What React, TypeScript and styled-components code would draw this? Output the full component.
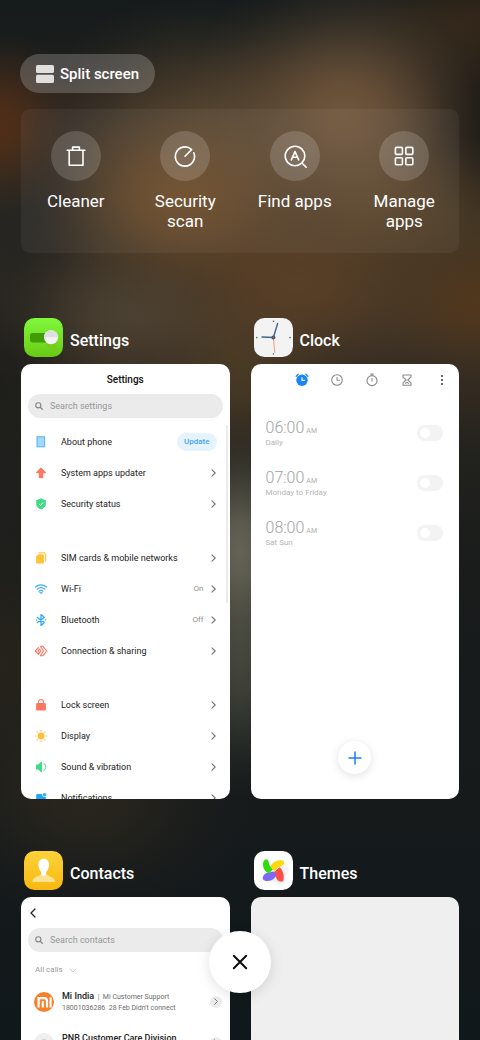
import React from "react";
import styled, { createGlobalStyle } from "styled-components";

const GlobalStyle = createGlobalStyle`
  *, *::before, *::after { box-sizing: border-box; }
  body { margin: 0; background: #161a1b; font-family: Roboto, "Liberation Sans", sans-serif; }
  h1, h2, h3, p, ul { margin: 0; padding: 0; }
  ul { list-style: none; }
  button { border: 0; padding: 0; background: none; color: inherit; font: inherit; cursor: pointer; }
  svg { display: block; flex: none; }
`;

/* A soft patch of wallpaper light that eases out towards its edge. */
const glow = (size: string, at: string, rgb: string, alpha: number) => {
  const stops = [
    [1, 0],
    [0.88, 20],
    [0.62, 40],
    [0.3, 62],
    [0.09, 82],
    [0, 100],
  ].map(([k, pos]) => `rgba(${rgb}, ${(alpha * k).toFixed(3)}) ${pos}%`);
  return `radial-gradient(ellipse ${size} at ${at}, ${stops.join(", ")})`;
};

const wallpaper = [
  glow("16% 9%", "0% 12%", "88, 47, 20", 0.8),
  glow("34% 15%", "72% 11%", "122, 93, 64", 0.85),
  glow("32% 10%", "38% 19%", "120, 80, 42", 0.75),
  glow("34% 13%", "42% 12%", "106, 86, 58", 0.55),
  glow("36% 10%", "62% 27%", "96, 66, 38", 0.75),
  glow("30% 8%", "82% 20%", "88, 64, 36", 0.65),
  glow("24% 8%", "100% 29%", "86, 56, 26", 0.75),
  glow("28% 8%", "27% 30%", "80, 70, 54", 0.7),
  glow("30% 8%", "100% 2%", "56, 41, 24", 0.8),
  glow("20% 12%", "100% 11%", "24, 23, 20", 0.95),
  glow("32% 18%", "2% 22%", "36, 36, 33", 0.95),
  glow("24% 16%", "0% 37%", "27, 28, 26", 0.9),
  glow("24% 10%", "50% 36%", "84, 66, 40", 0.6),
  glow("16% 13%", "50% 53%", "104, 102, 88", 0.95),
  glow("16% 13%", "50% 64%", "72, 74, 64", 0.85),
  glow("36% 12%", "18% 77%", "48, 42, 30", 0.7),
  glow("24% 18%", "0% 64%", "44, 38, 28", 0.7),
  "linear-gradient(#151a1b 0%, #1a1d1c 4%, #27221d 8%, #382f26 13%, #403525 22%, #3f3326 31%, #352c21 36%, #22221e 44%, #191c1b 55%, #161a1b 76%, #11181b 100%)",
].join(", ");

const Screen = styled.div`
  position: relative;
  height: 100vh;
  overflow: hidden;
  background: ${wallpaper};
`;

const Recents = styled.main`
  height: 100%;
  overflow-y: auto;
  scrollbar-width: none;
  padding: 54px 21px 52px;
`;

const SplitButton = styled.button`
  display: flex;
  align-items: center;
  gap: 6px;
  height: 39px;
  margin-left: -1px;
  padding: 0 16px;
  border-radius: 20px;
  background: rgba(255, 255, 255, 0.2);
  color: #fff;
  font-size: 15px;
  font-weight: 500;
`;

const ToolPanel = styled.nav`
  display: grid;
  grid-template-columns: repeat(4, 1fr);
  min-height: 144px;
  margin-top: 16px;
  padding-top: 22px;
  border-radius: 9px;
  background: rgba(255, 255, 255, 0.05);
`;

const Tool = styled.button`
  display: flex;
  flex-direction: column;
  align-items: center;
  gap: 10px;
  color: #fff;
  font-size: 17px;
  line-height: 20px;
`;

const ToolIcon = styled.span`
  display: grid;
  place-items: center;
  width: 50px;
  height: 50px;
  border-radius: 50%;
  background: rgba(255, 255, 255, 0.16);
`;

const ToolLabel = styled.span`
  max-width: 76px;
`;

const AppGrid = styled.div`
  display: grid;
  grid-template-columns: 1fr 1fr;
  gap: 52px 21px;
  margin-top: 65px;
`;

const AppHeader = styled.header`
  display: flex;
  align-items: center;
  gap: 7px;
  padding: 0 3px 7px;
`;

const AppName = styled.h2`
  padding-top: 7px;
  color: #fff;
  font-size: 16px;
  font-weight: 500;
  line-height: 20px;
`;

const Card = styled.div<{ $tone?: string }>`
  position: relative;
  display: flex;
  flex-direction: column;
  aspect-ratio: 417 / 870;
  overflow: hidden;
  border-radius: 10px;
  background: ${(p) => p.$tone ?? "#fff"};
  color: #222;
`;

const CardTitle = styled.h3`
  padding: 8px 0 6px;
  color: #111;
  font-size: 10px;
  font-weight: 500;
  line-height: 16px;
  text-align: center;
`;

const Search = styled.label`
  display: flex;
  flex: none;
  align-items: center;
  gap: 7px;
  height: 24px;
  margin: 0 7px;
  padding: 0 7px;
  border-radius: 12px;
  background: #ebebeb;
`;

const SearchInput = styled.input`
  flex: 1;
  min-width: 0;
  border: 0;
  padding: 0;
  outline: 0;
  background: none;
  font: 400 9px/14px Roboto, "Liberation Sans", sans-serif;
  &::placeholder { color: #969696; opacity: 1; }
`;

const SettingsList = styled.div`
  padding-top: 8px;
`;

const SettingsGroup = styled.ul`
  & + & { margin-top: 23px; }
`;

const SettingsRow = styled.button`
  display: flex;
  align-items: center;
  width: 100%;
  height: 31px;
  padding: 0 13px;
  font-size: 9px;
  line-height: 14px;
  text-align: left;
`;

const RowLabel = styled.span`
  flex: 1;
  padding-left: 13px;
  white-space: nowrap;
`;

const RowValue = styled.span`
  margin-right: 5px;
  color: #8d8d8d;
  font-size: 8px;
`;

const UpdatePill = styled.span`
  padding: 2px 7px;
  border-radius: 9px;
  background: #e4f3fe;
  color: #45a4ee;
  font-size: 8px;
  font-weight: 500;
`;

const ScrollThumb = styled.span`
  position: absolute;
  top: 14%;
  right: 2px;
  width: 2px;
  height: 41%;
  border-radius: 1px;
  background: #ebebeb;
`;

const ClockTabs = styled.div`
  display: flex;
  justify-content: flex-end;
  gap: 21px;
  padding: 9px 10px 0 0;
`;

const ClockTab = styled.button`
  display: grid;
  place-items: center;
  width: 14px;
  height: 14px;
`;

const AlarmList = styled.ul`
  padding: 21px 16px 0 15px;
`;

const Alarm = styled.li`
  display: flex;
  align-items: center;
  justify-content: space-between;
  height: 50px;
  color: #b4b4b4;
`;

const AlarmText = styled.div`
  padding-top: 1px;
`;

const AlarmTime = styled.p`
  font-size: 16px;
  font-weight: 300;
  line-height: 16px;
  color: #a2a2a2;
`;

const Meridiem = styled.span`
  margin-left: 2px;
  color: #b0b0b0;
  font-size: 7px;
  font-weight: 400;
`;

const AlarmDays = styled.p`
  font-size: 8px;
  line-height: 8px;
`;

const Switch = styled.input.attrs({ type: "checkbox" })`
  appearance: none;
  display: flex;
  align-items: center;
  width: 26px;
  height: 16px;
  margin: 0;
  padding: 0 3px;
  border-radius: 8px;
  background: #f3f3f3;
  cursor: pointer;
  &::before {
    content: "";
    width: 10px;
    height: 10px;
    border-radius: 50%;
    background: #fff;
  }
  &:checked { justify-content: flex-end; background: #1a84fb; }
`;

const AddButton = styled.button`
  display: grid;
  place-items: center;
  width: 33px;
  height: 33px;
  margin: auto auto 25px;
  border-radius: 50%;
  background: #fff;
  box-shadow: 0 2px 10px rgba(0, 0, 0, 0.12);
`;

const BackButton = styled.button`
  display: grid;
  flex: none;
  place-items: center;
  width: 24px;
  height: 31px;
`;

const CallFilter = styled.button`
  display: flex;
  align-items: center;
  gap: 6px;
  padding: 13px 14px 6px;
  color: #999;
  font-size: 8px;
  line-height: 10px;
`;

const CallRow = styled.li`
  display: flex;
  align-items: center;
  gap: 8px;
  height: 41px;
  padding: 0 8px 0 13px;
`;

const Avatar = styled.span<{ $brand?: boolean }>`
  display: grid;
  flex: none;
  place-items: center;
  width: 20px;
  height: 20px;
  overflow: hidden;
  border-radius: 50%;
  background: ${(p) => (p.$brand ? "#f6812a" : "#efefef")};
`;

const CallText = styled.div`
  flex: 1;
  min-height: 24px;
  padding-top: 2px;
  color: #6c6c6c;
  font-size: 7px;
  line-height: 11px;
  white-space: nowrap;
`;

const CallName = styled.span`
  color: #222;
  font-size: 9px;
  font-weight: 500;
`;

const CallMore = styled.button`
  display: grid;
  flex: none;
  place-items: center;
  width: 12px;
  height: 12px;
  border-radius: 50%;
  background: #ececec;
`;

const CloseAll = styled.button`
  position: absolute;
  bottom: 47px;
  left: calc(50% - 31px);
  display: grid;
  place-items: center;
  width: 62px;
  height: 62px;
  border-radius: 50%;
  background: #fff;
  box-shadow: 0 3px 14px rgba(0, 0, 0, 0.12);
`;

const SplitIcon = () => (
  <svg width="18" height="18" viewBox="0 0 18 18" fill="#e0dfdd">
    <rect width="18" height="8" rx="1.6" />
    <rect y="9.7" width="18" height="8.3" rx="1.6" />
  </svg>
);

const line = { fill: "none", stroke: "#fff", strokeWidth: 1.6, strokeLinecap: "round", strokeLinejoin: "round" } as const;

const TrashIcon = () => (
  <svg width="24" height="24" viewBox="0 0 24 24" {...line}>
    <path d="M3.2 6.2h17.6M5.2 6.4V21.2h13.8V6.4M8.6 6V3.1h6.8V6" />
  </svg>
);

const ScanIcon = () => (
  <svg width="24" height="24" viewBox="0 0 24 24" {...line}>
    <path d="M12 12.2L18.6 5.6A9.6 9.6 0 1 0 20.8 8.8" />
  </svg>
);

const FindIcon = () => (
  <svg width="26" height="26" viewBox="0 0 26 26" {...line}>
    <circle cx="13" cy="13" r="9.8" />
    <path d="M20.2 20.2L24.2 24.2M9.3 16.8L13 8.6L16.7 16.8M10.6 14.2H15.4" />
  </svg>
);

const GridIcon = () => (
  <svg width="24" height="24" viewBox="0 0 24 24" {...line}>
    {[3.4, 13.8].map((x) => [3.4, 13.8].map((y) => <rect key={`${x}-${y}`} x={x} y={y} width="7" height="7" rx="1" />))}
  </svg>
);

const SettingsLogo = () => (
  <svg width="39" height="39" viewBox="0 0 39 39">
    <defs>
      <linearGradient id="green" x2="0" y2="1">
        <stop stopColor="#80f83c" />
        <stop offset="1" stopColor="#68cb14" />
      </linearGradient>
    </defs>
    <rect width="39" height="39" rx="10.5" fill="url(#green)" />
    <path d="M22 26L30 35L33 32L31 24Z" fill="#7bc81c" opacity="0.8" />
    <rect x="6" y="15" width="20" height="9.4" rx="2.6" fill="#419c06" />
    <circle cx="27" cy="19.2" r="7" fill="#f4f3f3" />
    <path d="M20 19.2h14A7 7 0 0 0 20 19.2Z" fill="#e0dfdf" />
  </svg>
);

const ClockLogo = () => (
  <svg width="39" height="39" viewBox="0 0 39 39" strokeLinecap="round">
    <rect width="39" height="39" rx="10.5" fill="#f3f3f4" />
    <g fill="#55585f">
      <circle cx="19.4" cy="3.2" r="0.8" />
      <circle cx="36" cy="19.6" r="0.8" />
      <circle cx="19.4" cy="36" r="0.8" />
      <circle cx="2.8" cy="19.6" r="0.8" />
    </g>
    <path d="M19.3 19.5L20.8 34.5" stroke="#f6a27e" strokeWidth="1.1" />
    <path d="M19.4 19.5L8 19M19.4 19.5L23.6 5.5" stroke="#3f658e" strokeWidth="1.4" />
    <circle cx="19.4" cy="19.5" r="2" fill="#4c5878" />
    <circle cx="19.4" cy="19.5" r="0.8" fill="#9b5a50" />
  </svg>
);

const ContactsLogo = () => (
  <svg width="39" height="39" viewBox="0 0 39 39">
    <defs>
      <linearGradient id="yellow" x2="0" y2="1">
        <stop stopColor="#fcd33a" />
        <stop offset="1" stopColor="#f9b710" />
      </linearGradient>
    </defs>
    <rect width="39" height="39" rx="10.5" fill="url(#yellow)" />
    <path d="M8.4 31C8.6 25.8 13.5 26 17 23.4H22.4C25.9 26 30.8 25.8 31 31Z" fill="#fde293" />
    <path d="M19.7 7.8C23.2 7.8 25.2 10.3 25 14C24.8 17.2 23.6 19.6 22.2 20.9V23.2C22.2 25.4 17.2 25.4 17.2 23.2V20.9C15.8 19.6 14.6 17.2 14.4 14C14.2 10.3 16.2 7.8 19.7 7.8Z" fill="#fff" />
  </svg>
);

const ThemesLogo = () => (
  <svg width="39" height="39" viewBox="0 0 39 39">
    <rect width="39" height="39" rx="10.5" fill="#fff" />
    <path d="M30 13L35 18L28 35L14 28L22 20Z" fill="#f3f3f4" />
    <path d="M19.5 20.5L13.5 21.8C10.6 22.6 9 24.4 8.6 27.4C9.6 30 14 30.8 17.4 29.2C20 28 22.4 25.4 23.2 22.4Z" fill="#7b68f5" />
    <path d="M20.4 20.6L25.6 16.2C28.6 19 30.4 23 29.6 28.6C29.4 30.6 28 31 26.2 30.6C23.2 29.6 21.6 27.8 21.8 23Z" fill="#fd4e47" />
    <path d="M16.4 15.4C18.2 11.4 22.4 8.8 28 9.2C29.8 9.6 30.6 11 30.2 12.6C28.8 15.4 25.4 15.4 23.4 17L20.6 20.6Z" fill="#fdd90b" />
    <path d="M9 14C8.8 10.8 10 8.6 12.6 8.2C14.2 8.6 14.6 10.4 15 12.4C15.6 15.4 17.4 16.4 18.8 18.6L14.8 22.6C11.2 20.6 9.2 18 9 14Z" fill="#2fdc0e" />
  </svg>
);

const SearchIcon = () => (
  <svg width="8" height="8" viewBox="0 0 8 8" fill="none" stroke="#858585" strokeLinecap="round">
    <circle cx="3.3" cy="3.3" r="2.6" strokeWidth="1.1" />
    <path d="M5.4 5.4L7.3 7.3" strokeWidth="1.3" />
  </svg>
);

const Chevron = ({ color = "#777", size = 7 }) => (
  <svg width={size} height={size} viewBox="0 0 7 7" fill="none" stroke={color} strokeLinecap="round" strokeLinejoin="round">
    <path d="M2.6 0.7L5.4 3.5L2.6 6.3" />
  </svg>
);

const rowIcons: Record<string, React.ReactNode> = {
  phone: <rect x="3" y="1.8" width="7.6" height="10" fill="#a3d8fc" stroke="#51b3f6" />,
  update: <path d="M7 1.2L12 6.4Q12.2 7.2 11.4 7.2H9.2V11.6Q9.2 12.2 8.6 12.2H5.4Q4.8 12.2 4.8 11.6V7.2H2.6Q1.8 7.2 2 6.4Z" fill="#fb7863" />,
  shield: (
    <>
      <path d="M7 1.2Q9.4 3 11.8 3V7.4Q11.6 10.4 7 12.6Q2.4 10.4 2.2 7.4V3Q4.6 3 7 1.2Z" fill="#3fdc85" />
      <path d="M4.9 6.9L6.5 8.4L9.2 5.4" fill="none" stroke="#fff" />
    </>
  ),
  sim: (
    <>
      <path d="M4.5 1.8H9.8Q11.6 1.8 11.6 3.6V10.8" fill="none" stroke="#fbc94b" strokeWidth="1.2" />
      <path d="M4.4 3.2H8.6Q9.9 3.2 9.9 4.4V11.2Q9.9 12.4 8.7 12.4H3.3Q2.1 12.4 2.1 11.2V5.4Z" fill="#fcc238" />
    </>
  ),
  wifi: (
    <g fill="none" stroke="#3fabf6" strokeWidth="1.2" strokeLinecap="round">
      <path d="M1.4 5Q7 0.6 12.6 5M3.2 7.2Q7 4.2 10.8 7.2M5 9.2Q7 7.6 9 9.2" />
      <path d="M6.4 10.8L7 11.3L7.6 10.8Z" />
    </g>
  ),
  bluetooth: (
    <g fill="none" stroke="#2fa8f8" strokeWidth="1.3" strokeLinejoin="round" strokeLinecap="round">
      <path d="M3.4 4.4L10.4 9.6L7 12.4V1.6L10.4 4.4L3.4 9.6" />
      <path d="M2.4 7H2.5M11.6 7H11.7" />
    </g>
  ),
  share: (
    <g fill="none" stroke="#fa7660" strokeWidth="1.1" strokeLinejoin="round" strokeLinecap="round">
      <path d="M6.4 2.2H8.8L12.8 7L8.8 11.8H6.4L9.6 7Z" />
      <path d="M4.4 3.6L1.2 7L4.4 10.4L6.8 7L5.4 5L3.9 7L4.8 8" />
    </g>
  ),
  lock: (
    <>
      <path d="M4.4 6V4.2Q4.4 1.6 7 1.6Q9.6 1.6 9.6 4.2V6" fill="none" stroke="#fb8a78" strokeWidth="1.2" />
      <rect x="2.1" y="5" width="9.8" height="7.4" rx="1.2" fill="#fb7661" />
    </>
  ),
  sun: (
    <>
      <circle cx="7" cy="7" r="3.4" fill="#fcbf35" />
      <path d="M7 1.3V1.9M7 12.1V12.7M1.3 7H1.9M12.1 7H12.7M3 3L3.3 3.3M10.7 10.7L11 11M3 11L3.3 10.7M10.7 3.3L11 3" stroke="#fcc757" strokeWidth="1.2" strokeLinecap="round" />
    </>
  ),
  sound: (
    <>
      <path d="M2 4.4H4L7.4 1.8Q8 1.6 8 2.2V11.8Q8 12.4 7.4 12.2L4 9.6H2Z" fill="#3fdc85" />
      <path d="M9.6 3.2Q11.8 4.6 11.8 7Q11.8 9.4 9.6 10.8" fill="none" stroke="#6fe5a4" strokeWidth="1.2" />
    </>
  ),
  bell: (
    <>
      <path d="M3.2 3H8.2Q7.6 6 11.8 6V12.6H2.2V4Q2.2 3 3.2 3Z" fill="#22a6f9" />
      <circle cx="10.6" cy="3.7" r="1.8" fill="#35aefa" />
    </>
  ),
};

type Row = { icon: string; label: string; value?: string; update?: boolean };
const settingsGroups: Row[][] = [
  [
    { icon: "phone", label: "About phone", update: true },
    { icon: "update", label: "System apps updater" },
    { icon: "shield", label: "Security status" },
  ],
  [
    { icon: "sim", label: "SIM cards & mobile networks" },
    { icon: "wifi", label: "Wi-Fi", value: "On" },
    { icon: "bluetooth", label: "Bluetooth", value: "Off" },
    { icon: "share", label: "Connection & sharing" },
  ],
  [
    { icon: "lock", label: "Lock screen" },
    { icon: "sun", label: "Display" },
    { icon: "sound", label: "Sound & vibration" },
    { icon: "bell", label: "Notifications" },
  ],
];

const tools = [
  { label: "Cleaner", icon: <TrashIcon /> },
  { label: "Security scan", icon: <ScanIcon /> },
  { label: "Find apps", icon: <FindIcon /> },
  { label: "Manage apps", icon: <GridIcon /> },
];

const alarms = [
  { time: "06:00", days: "Daily" },
  { time: "07:00", days: "Monday to Friday" },
  { time: "08:00", days: "Sat Sun" },
];

const clockTabs = [
  {
    name: "Alarm",
    art: (
      <>
        <circle cx="7" cy="7.3" r="5.7" fill="#1a84fb" />
        <path d="M1.2 3.2L3.2 1.3M12.8 3.2L10.8 1.3" stroke="#1a84fb" strokeWidth="1.3" />
        <path d="M7 4.6V7.4H9.6" stroke="#fff" strokeWidth="1.1" />
      </>
    ),
  },
  {
    name: "World clock",
    art: (
      <g stroke="#8b8b8b" strokeWidth="1.1">
        <circle cx="7" cy="7" r="5.3" />
        <path d="M7 4.2V7.3H9.4" />
      </g>
    ),
  },
  {
    name: "Stopwatch",
    art: (
      <g stroke="#8b8b8b" strokeWidth="1.1">
        <circle cx="7" cy="7.6" r="5" />
        <path d="M5.6 1H8.4M7 1V2.6M7 5.4V8" />
      </g>
    ),
  },
  {
    name: "Timer",
    art: (
      <g stroke="#8b8b8b" strokeWidth="1.1">
        <path d="M3 2H11V4.2L7.8 7L11 9.8V12.2H3V9.8L6.2 7L3 4.2ZM5.6 10.4L7 9.2L8.4 10.4" />
      </g>
    ),
  },
  {
    name: "More",
    art: (
      <g fill="#333">
        <circle cx="7" cy="3" r="1" />
        <circle cx="7" cy="7" r="1" />
        <circle cx="7" cy="11" r="1" />
      </g>
    ),
  },
];

const SettingsCard = () => (
  <Card>
    <CardTitle>Settings</CardTitle>
    <Search>
      <SearchIcon />
      <SearchInput type="search" placeholder="Search settings" aria-label="Search settings" />
    </Search>
    <SettingsList>
      {settingsGroups.map((group, i) => (
        <SettingsGroup key={i}>
          {group.map((row) => (
            <li key={row.label}>
              <SettingsRow>
                <svg width="14" height="14" viewBox="0 0 14 14">{rowIcons[row.icon]}</svg>
                <RowLabel>{row.label}</RowLabel>
                {row.value && <RowValue>{row.value}</RowValue>}
                {row.update ? <UpdatePill>Update</UpdatePill> : <Chevron size={8} />}
              </SettingsRow>
            </li>
          ))}
        </SettingsGroup>
      ))}
    </SettingsList>
    <ScrollThumb />
  </Card>
);

const ClockCard = () => (
  <Card>
    <ClockTabs>
      {clockTabs.map((tab) => (
        <ClockTab key={tab.name} aria-label={tab.name}>
          <svg width="14" height="14" viewBox="0 0 14 14" fill="none" strokeLinecap="round" strokeLinejoin="round">{tab.art}</svg>
        </ClockTab>
      ))}
    </ClockTabs>
    <AlarmList>
      {alarms.map((alarm) => (
        <Alarm key={alarm.time}>
          <AlarmText>
            <AlarmTime>{alarm.time}<Meridiem>AM</Meridiem></AlarmTime>
            <AlarmDays>{alarm.days}</AlarmDays>
          </AlarmText>
          <Switch aria-label={`${alarm.time} alarm`} />
        </Alarm>
      ))}
    </AlarmList>
    <AddButton aria-label="Add alarm">
      <svg width="14" height="14" viewBox="0 0 14 14" stroke="#1a7ef5" strokeWidth="1.5" strokeLinecap="round">
        <path d="M7 1V13M1 7H13" />
      </svg>
    </AddButton>
  </Card>
);

const ContactsCard = () => (
  <Card>
    <BackButton aria-label="Back">
      <svg width="8" height="10" viewBox="0 0 8 10" fill="none" stroke="#222" strokeWidth="1.3" strokeLinecap="round" strokeLinejoin="round">
        <path d="M6 1L2 5L6 9" />
      </svg>
    </BackButton>
    <Search>
      <SearchIcon />
      <SearchInput type="search" placeholder="Search contacts" aria-label="Search contacts" />
    </Search>
    <CallFilter>
      All calls
      <svg width="8" height="5" viewBox="0 0 8 5" fill="none" stroke="#bbb" strokeWidth="0.8">
        <path d="M0.8 0.8L4 4L7.2 0.8" />
      </svg>
    </CallFilter>
    <ul>
      <CallRow>
        <Avatar $brand>
          <svg width="20" height="20" viewBox="0 0 20 20" fill="none" stroke="#fff" strokeWidth="2.2">
            <path d="M4.6 15.4V6.2H10.2Q13 6.2 13 9V15.4M8.8 9V15.4M16.6 5.2V15.4" />
          </svg>
        </Avatar>
        <CallText>
          <p><CallName>Mi India</CallName>&nbsp; | &nbsp;Mi Customer Support</p>
          <p>18001036286&nbsp; 28 Feb Didn't connect</p>
        </CallText>
        <CallMore aria-label="Mi India details"><Chevron /></CallMore>
      </CallRow>
      <CallRow>
        <Avatar>
          <svg width="20" height="20" viewBox="0 0 20 20" fill="#d4d4d4">
            <circle cx="10" cy="8.4" r="2.6" />
            <path d="M4.8 15Q5.4 11.8 10 11.8Q14.6 11.8 15.2 15Z" />
          </svg>
        </Avatar>
        <CallText>
          <p><CallName>PNB Customer Care Division</CallName></p>
        </CallText>
        <CallMore aria-label="PNB Customer Care Division details"><Chevron /></CallMore>
      </CallRow>
    </ul>
  </Card>
);

const apps = [
  { name: "Settings", logo: <SettingsLogo />, card: <SettingsCard /> },
  { name: "Clock", logo: <ClockLogo />, card: <ClockCard /> },
  { name: "Contacts", logo: <ContactsLogo />, card: <ContactsCard /> },
  { name: "Themes", logo: <ThemesLogo />, card: <Card $tone="#efefef" /> },
];

export default function App() {
  return (
    <Screen>
      <GlobalStyle />
      <Recents>
        <SplitButton><SplitIcon />Split screen</SplitButton>
        <ToolPanel aria-label="Tools">
          {tools.map((tool) => (
            <Tool key={tool.label}>
              <ToolIcon>{tool.icon}</ToolIcon>
              <ToolLabel>{tool.label}</ToolLabel>
            </Tool>
          ))}
        </ToolPanel>
        <AppGrid>
          {apps.map((app) => (
            <section key={app.name} aria-label={app.name}>
              <AppHeader>{app.logo}<AppName>{app.name}</AppName></AppHeader>
              {app.card}
            </section>
          ))}
        </AppGrid>
      </Recents>
      <CloseAll aria-label="Close all apps">
        <svg width="16" height="16" viewBox="0 0 16 16" stroke="#0b0b0b" strokeWidth="2" strokeLinecap="round">
          <path d="M1.8 1.8L14.2 14.2M14.2 1.8L1.8 14.2" />
        </svg>
      </CloseAll>
    </Screen>
  );
}
